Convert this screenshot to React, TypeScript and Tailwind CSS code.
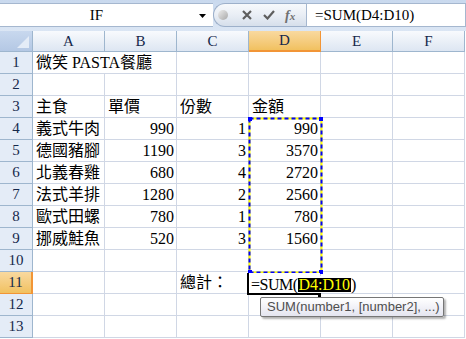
const cols = ['A', 'B', 'C', 'D', 'E', 'F'];

// sheet contents, row by row (columns A-F)
const data: string[][] = [
  ['微笑 PASTA餐廳', '', '', '', '', ''],
  ['', '', '', '', '', ''],
  ['主食', '單價', '份數', '金額', '', ''],
  ['義式牛肉', '990', '1', '990', '', ''],
  ['德國豬腳', '1190', '3', '3570', '', ''],
  ['北義春雞', '680', '4', '2720', '', ''],
  ['法式羊排', '1280', '2', '2560', '', ''],
  ['歐式田螺', '780', '1', '780', '', ''],
  ['挪威鮭魚', '520', '3', '1560', '', ''],
  ['', '', '', '', '', ''],
  ['', '', '總計：', '', '', ''],
  ['', '', '', '', '', ''],
  ['', '', '', '', '', ''],
];

const font = { fontFamily: "'Liberation Serif', 'Noto Sans CJK TC', serif" };

function FormulaBar() {
  return (
    <div className="h-[31px] bg-gradient-to-b from-[#c9d9ee] to-[#dbe6f4] pt-[3px] pb-[4px]">
      <div className="flex h-[24px]">
        <div className="relative flex w-[213px] items-center justify-center border-y border-[#a5b7cf] bg-white text-[15px] text-black" style={font}>
          <span className="-ml-[20px]">IF</span>
          <svg className="absolute right-[7px] top-[10px]" width="7" height="4" viewBox="0 0 7 4">
            <polygon points="0,0 7,0 3.5,4" fill="#000" />
          </svg>
        </div>
        <div className="flex w-[93px] items-center rounded-l-full border border-r-0 border-[#9db0ca] bg-gradient-to-b from-[#f7f9fc] via-[#e9eef5] to-[#d6dfeb] pl-[4px]">
          <span className="h-[10px] w-[10px] rounded-full bg-gradient-to-br from-[#eeeeee] to-[#a8a8a8]" />
          <svg className="ml-[14px]" width="10" height="10" viewBox="0 0 10 10">
            <path d="M1 1 L9 9 M9 1 L1 9" stroke="#5e5e5e" strokeWidth="2.2" />
          </svg>
          <svg className="ml-[11px]" width="12" height="10" viewBox="0 0 12 10">
            <path d="M1 5 L4.5 8.5 L11 1" stroke="#5e5e5e" strokeWidth="2.2" fill="none" />
          </svg>
          <span className="ml-[10px] text-[14px] font-bold italic text-[#707070]" style={{ fontFamily: "'Liberation Serif', serif" }}>
            f<span className="text-[11px]">x</span>
          </span>
        </div>
        <div className="flex flex-1 items-center border border-[#a5b7cf] bg-white pl-[8px] text-[15px] text-black" style={font}>
          =SUM(D4:D10)
        </div>
      </div>
    </div>
  );
}

function HeaderRow() {
  return (
    <div className="flex h-[21px]">
      <div className="relative w-[33px] border-r border-b border-[#9eb6ce] bg-gradient-to-b from-[#c8d8ee] to-[#b4c8e4]">
        <svg className="absolute right-[3px] bottom-[3px]" width="12" height="12" viewBox="0 0 12 12">
          <polygon points="12,0 12,12 0,12" fill="#e4ecf7" />
        </svg>
      </div>
      {cols.map((c) => (
        <div
          key={c}
          className={
            c === 'D'
              ? 'flex w-[72px] items-center justify-center border-r border-b-2 border-r-[#f29536] border-b-[#f29536] bg-gradient-to-b from-[#f9d99f] to-[#f1c15f] text-[15px] text-[#15284b]'
              : 'flex w-[72px] items-center justify-center border-r border-b border-[#9eb6ce] bg-gradient-to-b from-[#f8fafd] to-[#dde6f2] text-[15px] text-[#15284b]'
          }
          style={font}
        >
          {c}
        </div>
      ))}
    </div>
  );
}

function SheetRow({ n, cells }: { n: number; cells: string[] }) {
  const active = n === 11;
  return (
    <div className="flex h-[22px]">
      <div
        className={
          active
            ? 'flex w-[33px] items-center justify-center border-r-2 border-b border-r-[#f29536] border-b-[#f29536] bg-gradient-to-b from-[#f9d99f] to-[#f1c15f] text-[15px] text-[#15284b]'
            : 'flex w-[33px] items-center justify-center border-r border-b border-[#9eb6ce] bg-[#e4ecf7] text-[15px] text-[#15284b]'
        }
        style={font}
      >
        {n}
      </div>
      {cells.map((v, i) => {
        const numeric = /^\d+$/.test(v);
        const overflow = n === 1 && i === 0;
        return (
          <div
            key={i}
            className={
              'relative flex w-[72px] items-end border-b border-[#d0d7e5] pb-[1px] text-[16px] leading-[18px] text-black ' +
              (overflow ? '' : 'border-r ') +
              (numeric ? 'justify-end pr-[2px]' : 'justify-start pl-[3px]')
            }
            style={font}
          >
            <span className="whitespace-nowrap">{v}</span>
          </div>
        );
      })}
    </div>
  );
}

export default function App() {
  return (
    <div className="h-[339px] w-[466px] overflow-hidden bg-white">
      <FormulaBar />
      <div className="relative">
        <HeaderRow />
        {data.map((r, i) => (
          <SheetRow key={i} n={i + 1} cells={r} />
        ))}

        {/* marching ants around D4:D10 */}
        <svg className="absolute left-[248px] top-[86px]" width="75" height="157" viewBox="0 0 75 157">
          <rect x="1.5" y="1.5" width="72" height="154" fill="none" stroke="#ffff00" strokeWidth="2" />
          <rect x="1.5" y="1.5" width="72" height="154" fill="none" stroke="#0000ff" strokeWidth="2" strokeDasharray="4 3" />
          <rect x="0" y="0" width="4" height="4" fill="#0000ff" />
          <rect x="71" y="0" width="4" height="4" fill="#0000ff" />
          <rect x="0" y="153" width="4" height="4" fill="#0000ff" />
          <rect x="71" y="153" width="4" height="4" fill="#0000ff" />
        </svg>

        {/* cell being edited: D11 */}
        <div className="absolute left-[247px] top-[242px] h-[22px] w-[73px] border-l-2 border-b-2 border-black bg-white" />
        <div className="absolute left-[318px] top-[262px] h-[5px] w-[3px] bg-black" />
        <div className="absolute left-[251px] top-[245px] flex h-[17px] items-center bg-white text-[16px] leading-[16px] text-black" style={font}>
          <span className="tracking-[-0.5px]">=SUM(</span>
          <span className="flex h-[14px] items-center bg-black px-[1px] text-[#ffff00]">D4:D10</span>
          <span>)</span>
        </div>

        {/* argument tooltip */}
        <div
          className="absolute left-[260px] top-[266px] flex h-[20px] w-[184px] items-center rounded-[2px] border border-[#767676] bg-gradient-to-b from-[#ffffff] to-[#e4e5f0] pl-[6px] text-[13px] text-[#4e4e4e] shadow-[2px_2px_2px_rgba(0,0,0,0.3)]"
          style={{ fontFamily: "'Liberation Sans', sans-serif" }}
        >
          SUM(number1, [number2], ...)
        </div>
      </div>
    </div>
  );
}
